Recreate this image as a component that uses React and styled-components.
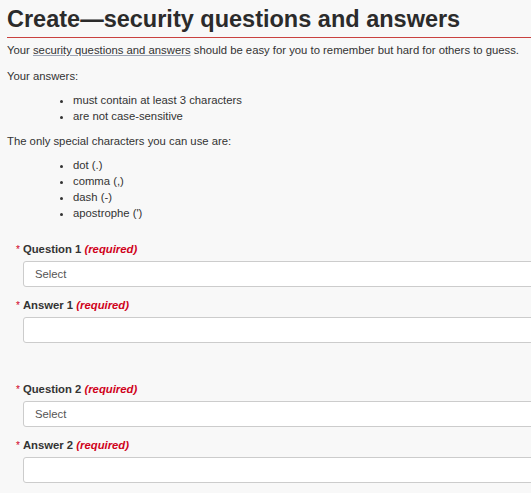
import styled, { createGlobalStyle } from 'styled-components';

const GlobalStyle = createGlobalStyle`
    html, body {
        margin: 0;
        padding: 0;
        background: #f8f8f8;
        overflow: hidden;
    }
    body {
        font-family: "Liberation Sans", Arial, sans-serif;
        color: #333;
    }
`;

const Page = styled.div`
    padding: 0 0 0 7px;
    overflow: hidden;
`;

const Title = styled.h1`
    margin: 0;
    padding: 5px 0 4px;
    font-size: 23.5px;
    line-height: 28px;
    font-weight: bold;
    color: #2b2b2b;
    border-bottom: 1px solid #c9413f;
`;

const Intro = styled.p`
    margin: 4px 0 10px;
    font-size: 11.3px;
    line-height: 16px;
`;

const Text = styled.p`
    margin: 0 0 8px;
    font-size: 11.3px;
    line-height: 16px;
`;

const TextLink = styled.a`
    color: #333;
    text-decoration: underline;
    text-decoration-color: #9aa3b5;
`;

const List = styled.ul`
    margin: 0 0 9px;
    padding-left: 66px;
    font-size: 11.3px;
    line-height: 16px;
`;

const Form = styled.form`
    padding: 11px 0 0 9px;
`;

const Group = styled.div`
    margin-bottom: 38px;
`;

const Field = styled.div`
    margin-bottom: 10px;
`;

const Label = styled.label`
    display: block;
    font-size: 11.3px;
    line-height: 16px;
    font-weight: bold;
    margin-bottom: 3px;
`;

const Star = styled.span`
    color: #d0021b;
    font-weight: normal;
    font-size: 10px;
    margin-right: 3px;
`;

const Required = styled.em`
    color: #d0021b;
    font-weight: bold;
`;

const Select = styled.select`
    appearance: none;
    display: block;
    box-sizing: border-box;
    width: 560px;
    height: 26px;
    margin-left: 7px;
    padding: 0 11px;
    border: 1px solid #ccc;
    border-radius: 3px;
    background: #fff;
    font-family: inherit;
    font-size: 11.3px;
    color: #555;
`;

const Input = styled.input`
    display: block;
    box-sizing: border-box;
    width: 560px;
    height: 26px;
    margin-left: 7px;
    padding: 0 11px;
    border: 1px solid #ccc;
    border-radius: 3px;
    background: #fff;
    font-family: inherit;
    font-size: 11.3px;
`;

const Question = ({ n }) => (
    <Group>
        <Field>
            <Label>
                <Star>*</Star>Question {n} <Required>(required)</Required>
            </Label>
            <Select defaultValue="">
                <option value="">Select</option>
            </Select>
        </Field>
        <Field>
            <Label>
                <Star>*</Star>Answer {n} <Required>(required)</Required>
            </Label>
            <Input type="text" />
        </Field>
    </Group>
);

const App = () => {
    return (
        <Page>
            <GlobalStyle />
            <Title>Create—security questions and answers</Title>
            <Intro>
                Your <TextLink href="#">security questions and answers</TextLink> should be easy for you to remember but hard for others to guess.
            </Intro>
            <Text>Your answers:</Text>
            <List>
                <li>must contain at least 3 characters</li>
                <li>are not case-sensitive</li>
            </List>
            <Text>The only special characters you can use are:</Text>
            <List>
                <li>dot (.)</li>
                <li>comma (,)</li>
                <li>dash (-)</li>
                <li>apostrophe (')</li>
            </List>
            <Form>
                <Question n={1} />
                <Question n={2} />
            </Form>
        </Page>
    );
};

export default App;
